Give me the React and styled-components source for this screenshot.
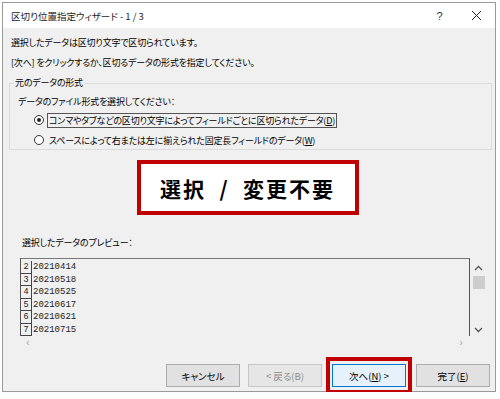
import React from "react";
import styled, { createGlobalStyle } from "styled-components";

const Global = createGlobalStyle`
  html, body {
    margin: 0;
    background: #ffffff;
  }
  body {
    font-family: "Noto Sans CJK JP", "Noto Sans", sans-serif;
    font-feature-settings: "palt";
    color: #000;
  }
`;

const rows = [
  ["2", "20210414"],
  ["3", "20210518"],
  ["4", "20210525"],
  ["5", "20210617"],
  ["6", "20210621"],
  ["7", "20210715"],
];

function App() {
  return (
    <>
      <Global />
      <Dialog>
        <TitleBar>
          <Title>区切り位置指定ウィザード - 1 / 3</Title>
          <TitleButtons>
            <TitleBtn>?</TitleBtn>
            <TitleBtn>
              <svg width="11" height="11" viewBox="0 0 11 11">
                <path d="M1 1L10 10M10 1L1 10" stroke="#222" strokeWidth="1" />
              </svg>
            </TitleBtn>
          </TitleButtons>
        </TitleBar>
        <Body>
          <Line>選択したデータは区切り文字で区切られています。</Line>
          <Line>[次へ] をクリックするか、区切るデータの形式を指定してください。</Line>
          <Group>
            <Legend>元のデータの形式</Legend>
            <GroupText>データのファイル形式を選択してください：</GroupText>
            <Radio>
              <RadioDot checked />
              <RadioLabel focused>
                コンマやタブなどの区切り文字によってフィールドごとに区切られたデータ(<u>D</u>)
              </RadioLabel>
            </Radio>
            <Radio>
              <RadioDot />
              <RadioLabel>
                スペースによって右または左に揃えられた固定長フィールドのデータ(<u>W</u>)
              </RadioLabel>
            </Radio>
          </Group>
          <NoteRow>
            <Note>選択 &nbsp;/&nbsp; 変更不要</Note>
          </NoteRow>
          <PreviewLabel>選択したデータのプレビュー：</PreviewLabel>
          <PreviewWrap>
            <PreviewBox>
              {rows.map(([n, v]) => (
                <PreviewRow key={n}>
                  <RowNum>{n}</RowNum>
                  <RowVal>{v}</RowVal>
                </PreviewRow>
              ))}
            </PreviewBox>
            <VScroll>
              <Arrow>
                <svg width="9" height="6" viewBox="0 0 9 6">
                  <path d="M1 5L4.5 1.5L8 5" stroke="#555" strokeWidth="1.3" fill="none" />
                </svg>
              </Arrow>
              <Thumb />
              <Spacer />
              <Arrow>
                <svg width="9" height="6" viewBox="0 0 9 6">
                  <path d="M1 1L4.5 4.5L8 1" stroke="#555" strokeWidth="1.3" fill="none" />
                </svg>
              </Arrow>
            </VScroll>
          </PreviewWrap>
          <HScroll>
            <span>‹</span>
            <span>›</span>
          </HScroll>
          <Buttons>
            <Button>キャンセル</Button>
            <Button disabled>&lt; 戻る(B)</Button>
            <Highlight>
              <Button primary>
                次へ(<u>N</u>) &gt;
              </Button>
            </Highlight>
            <Button>
              完了(<u>E</u>)
            </Button>
          </Buttons>
        </Body>
      </Dialog>
    </>
  );
}

export default App;

const Dialog = styled.div`
  margin: 2px 0 0 2px;
  width: 494px;
  height: 390px;
  border: 1px solid #9a9a9a;
  box-sizing: border-box;
  background: #f0f0f0;
  display: flex;
  flex-direction: column;
`;

const TitleBar = styled.div`
  height: 25px;
  background: #ffffff;
  display: flex;
  align-items: center;
  justify-content: space-between;
  padding: 0 0 0 8px;
`;

const Title = styled.div`
  font-size: 9.5px;
  color: #222;
`;

const TitleButtons = styled.div`
  display: flex;
  align-items: center;
`;

const TitleBtn = styled.div`
  width: 37px;
  height: 25px;
  display: flex;
  align-items: center;
  justify-content: center;
  font-size: 11px;
  color: #333;
  font-family: "Liberation Sans", sans-serif;
`;

const Body = styled.div`
  flex: 1;
  padding: 5px 5px 0 6px;
  display: flex;
  flex-direction: column;
`;

const Line = styled.div`
  font-size: 9px;
  letter-spacing: -0.2px;
  line-height: 20px;
  padding-left: 2px;
`;

const Group = styled.div`
  position: relative;
  margin: 10px 0 0 0;
  width: 483px;
  height: 67px;
  box-sizing: border-box;
  border: 1px solid #dcdcdc;
  padding: 10px 0 0 8px;
`;

const Legend = styled.div`
  position: absolute;
  top: -8px;
  left: 3px;
  padding: 0 2px;
  background: #f0f0f0;
  font-size: 9px;
  letter-spacing: -0.2px;
  line-height: 14px;
`;

const GroupText = styled.div`
  font-size: 9px;
  letter-spacing: -0.2px;
  line-height: 16px;
`;

const Radio = styled.div`
  display: flex;
  align-items: center;
  height: 20px;
  padding-left: 16px;
  gap: 3px;
`;

const RadioDot = styled.div`
  width: 10px;
  height: 10px;
  border-radius: 50%;
  border: 1px solid #333;
  background: #fff;
  box-sizing: border-box;
  position: relative;
  &::after {
    content: "";
    display: ${(p) => (p.checked ? "block" : "none")};
    position: absolute;
    left: 2px;
    top: 2px;
    width: 4px;
    height: 4px;
    border-radius: 50%;
    background: #222;
  }
`;

const RadioLabel = styled.div`
  font-size: 9px;
  letter-spacing: -0.2px;
  line-height: 13px;
  padding: 0 1px;
  border: 1px solid ${(p) => (p.focused ? "#555" : "transparent")};
  u {
    text-decoration: underline;
  }
`;

const NoteRow = styled.div`
  display: flex;
  justify-content: center;
  margin-top: 10px;
  padding-right: 4px;
`;

const Note = styled.div`
  width: 222px;
  height: 55px;
  box-sizing: border-box;
  border: 4px solid #c00000;
  background: #ffffff;
  display: flex;
  align-items: center;
  justify-content: center;
  font-size: 21px;
  font-weight: 700;
  letter-spacing: 2px;
`;

const PreviewLabel = styled.div`
  font-size: 9px;
  letter-spacing: -0.2px;
  line-height: 16px;
  margin: 20px 0 0 13px;
`;

const PreviewWrap = styled.div`
  display: flex;
  margin: 7px 0 0 11px;
  height: 78px;
`;

const PreviewBox = styled.div`
  width: 450px;
  box-sizing: border-box;
  border: 1px solid #555;
  border-bottom: none;
  border-top-color: #777;
  padding-top: 2px;
  overflow: hidden;
`;

const PreviewRow = styled.div`
  display: flex;
  height: 12.5px;
  align-items: stretch;
`;

const RowNum = styled.div`
  width: 11px;
  box-sizing: border-box;
  border: 1px solid #444;
  border-top: none;
  border-left: none;
  font-family: "Liberation Mono", monospace;
  font-size: 8.5px;
  line-height: 12px;
  text-align: center;
  color: #222;
`;

const RowVal = styled.div`
  font-family: "Liberation Mono", monospace;
  font-size: 9px;
  line-height: 13px;
  padding-left: 1px;
  color: #222;
`;

const VScroll = styled.div`
  width: 17px;
  display: flex;
  flex-direction: column;
  align-items: center;
  padding-top: 4px;
`;

const Arrow = styled.div`
  height: 12px;
  display: flex;
  align-items: center;
  justify-content: center;
`;

const Thumb = styled.div`
  width: 12px;
  height: 13px;
  margin-top: 2px;
  background: #cdcdcd;
`;

const Spacer = styled.div`
  flex: 1;
`;

const HScroll = styled.div`
  margin: 0 0 0 12px;
  width: 450px;
  height: 12px;
  display: flex;
  justify-content: space-between;
  align-items: center;
  padding: 0 8px 0 5px;
  box-sizing: border-box;
  font-family: "Liberation Sans", sans-serif;
  font-size: 11px;
  color: #aaa;
  line-height: 12px;
`;

const Buttons = styled.div`
  display: flex;
  justify-content: flex-end;
  align-items: center;
  gap: 8px;
  margin-top: 16px;
`;

const Highlight = styled.div`
  border: 4px solid #c00000;
  padding: 3px 2px;
  margin: -7px -4px;
  display: flex;
`;

const Button = styled.div`
  width: 74px;
  height: 23px;
  box-sizing: border-box;
  border: 1px solid ${(p) => (p.primary ? "#0078d7" : p.disabled ? "#c6c6c6" : "#adadad")};
  background: ${(p) => (p.primary ? "#e5f1fb" : p.disabled ? "#e6e6e6" : "#e1e1e1")};
  color: ${(p) => (p.disabled ? "#8a8a8a" : "#000")};
  display: flex;
  align-items: center;
  justify-content: center;
  font-size: 9.5px;
  white-space: pre;
`;
